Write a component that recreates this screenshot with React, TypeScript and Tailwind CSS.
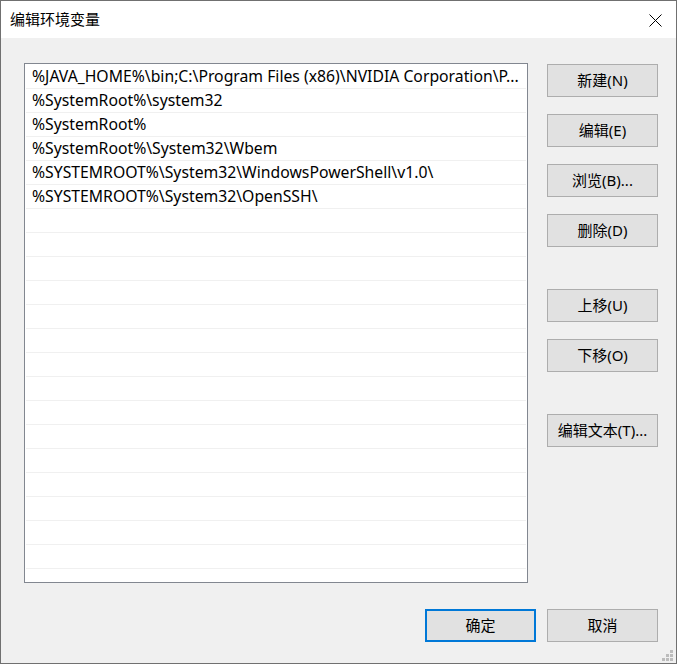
const paths = [
  "%JAVA_HOME%\\bin;C:\\Program Files (x86)\\NVIDIA Corporation\\P...",
  "%SystemRoot%\\system32",
  "%SystemRoot%",
  "%SystemRoot%\\System32\\Wbem",
  "%SYSTEMROOT%\\System32\\WindowsPowerShell\\v1.0\\",
  "%SYSTEMROOT%\\System32\\OpenSSH\\",
];

const font = {
  fontFamily: '"Noto Sans", "Noto Sans CJK SC", sans-serif',
};

function Btn({
  label,
  className = "",
  primary = false,
}: {
  label: string;
  className?: string;
  primary?: boolean;
}) {
  return (
    <button
      className={`w-[111px] h-[33px] bg-[#e1e1e1] text-[15px] text-black leading-none flex items-center justify-center ${
        primary ? "border-2 border-[#0078d7]" : "border border-[#adadad]"
      } ${className}`}
    >
      {label}
    </button>
  );
}

export default function App() {
  const rows = [...paths, ...Array(15).fill("")];

  return (
    <div
      className="relative w-[677px] h-[664px] border border-[#707070] bg-[#f0f0f0] flex flex-col overflow-hidden"
      style={font}
    >
      {/* title bar */}
      <div className="h-[37px] bg-white flex items-center justify-between pl-[9px] pr-[14px]">
        <span className="text-[15px] text-black">编辑环境变量</span>
        <svg width="13" height="13" viewBox="0 0 13 13" className="mt-[1px]">
          <path d="M0.5 0.5 L12.5 12.5 M12.5 0.5 L0.5 12.5" stroke="#000" strokeWidth="1" />
        </svg>
      </div>

      {/* body */}
      <div className="flex pt-[25px] pl-[23px]">
        <div className="w-[504px] h-[520px] border border-[#828790] bg-white pt-[1px] overflow-hidden">
          {rows.map((p, i) => (
            <div
              key={i}
              className="h-[24px] mx-[1px] border-b border-[#f0f0f0] pl-[6px] flex items-center text-[15.75px] text-black whitespace-nowrap"
            >
              {p}
            </div>
          ))}
        </div>

        <div className="ml-[19px] mt-[1px] flex flex-col">
          <Btn label="新建(N)" />
          <Btn label="编辑(E)" className="mt-[17px]" />
          <Btn label="浏览(B)..." className="mt-[17px]" />
          <Btn label="删除(D)" className="mt-[17px]" />
          <Btn label="上移(U)" className="mt-[42px]" />
          <Btn label="下移(O)" className="mt-[17px]" />
          <Btn label="编辑文本(T)..." className="mt-[42px]" />
        </div>
      </div>

      {/* footer buttons */}
      <div className="mt-[26px] flex justify-end gap-[11px] pr-[18px]">
        <Btn label="确定" primary />
        <Btn label="取消" />
      </div>

      {/* resize grip */}
      <div className="absolute right-[3px] bottom-[2px] grid grid-cols-3 gap-[1px]">
        <span className="w-[3px] h-[3px]" />
        <span className="w-[3px] h-[3px]" />
        <span className="w-[3px] h-[3px] bg-[#bcbcbc]" />
        <span className="w-[3px] h-[3px]" />
        <span className="w-[3px] h-[3px] bg-[#bcbcbc]" />
        <span className="w-[3px] h-[3px] bg-[#bcbcbc]" />
        <span className="w-[3px] h-[3px] bg-[#bcbcbc]" />
        <span className="w-[3px] h-[3px] bg-[#bcbcbc]" />
        <span className="w-[3px] h-[3px] bg-[#bcbcbc]" />
      </div>
    </div>
  );
}
